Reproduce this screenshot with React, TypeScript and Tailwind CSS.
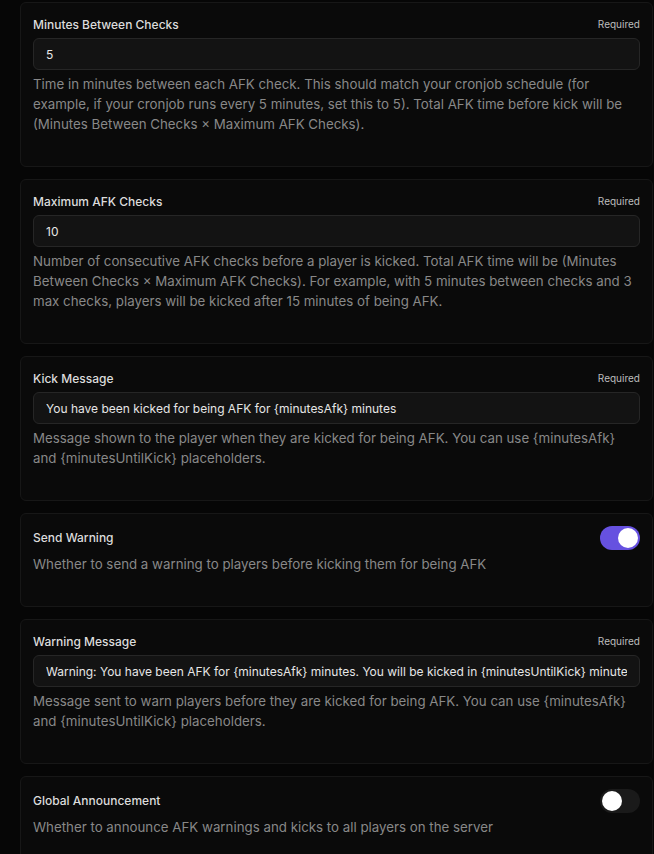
import React, { useState } from "react";

type Field =
    | { kind: "text"; label: string; value: string; help: string }
    | { kind: "toggle"; label: string; on: boolean; help: string };

const fields: Field[] = [
    {
        kind: "text",
        label: "Minutes Between Checks",
        value: "5",
        help: "Time in minutes between each AFK check. This should match your cronjob schedule (for example, if your cronjob runs every 5 minutes, set this to 5). Total AFK time before kick will be (Minutes Between Checks × Maximum AFK Checks).",
    },
    {
        kind: "text",
        label: "Maximum AFK Checks",
        value: "10",
        help: "Number of consecutive AFK checks before a player is kicked. Total AFK time will be (Minutes Between Checks × Maximum AFK Checks). For example, with 5 minutes between checks and 3 max checks, players will be kicked after 15 minutes of being AFK.",
    },
    {
        kind: "text",
        label: "Kick Message",
        value: "You have been kicked for being AFK for {minutesAfk} minutes",
        help: "Message shown to the player when they are kicked for being AFK. You can use {minutesAfk} and {minutesUntilKick} placeholders.",
    },
    {
        kind: "toggle",
        label: "Send Warning",
        on: true,
        help: "Whether to send a warning to players before kicking them for being AFK",
    },
    {
        kind: "text",
        label: "Warning Message",
        value: "Warning: You have been AFK for {minutesAfk} minutes. You will be kicked in {minutesUntilKick} minutes.",
        help: "Message sent to warn players before they are kicked for being AFK. You can use {minutesAfk} and {minutesUntilKick} placeholders.",
    },
    {
        kind: "toggle",
        label: "Global Announcement",
        on: false,
        help: "Whether to announce AFK warnings and kicks to all players on the server",
    },
];

function Toggle({ initial }: { initial: boolean }) {
    const [on, setOn] = useState(initial);
    return (
        <button
            type="button"
            onClick={() => setOn(!on)}
            className={`relative h-6 w-10 shrink-0 rounded-full transition-colors ${on ? "bg-[#6651e0]" : "bg-[#1a1a1a]"}`}
        >
            <span
                className={`absolute top-0.5 h-5 w-5 rounded-full bg-white transition-all ${on ? "left-[18px]" : "left-0.5"}`}
            />
        </button>
    );
}

function FieldCard({ field }: { field: Field }) {
    return (
        <div className="rounded-md border border-[#171717] bg-[#0a0a0a] px-3 pt-3 pb-8">
            {field.kind === "text" ? (
                <>
                    <div className="mb-1 flex h-[19px] items-center justify-between">
                        <label className="text-xs font-medium text-[#dcdcdc]">{field.label}</label>
                        <span className="text-[10px] text-[#bdbdbd]">Required</span>
                    </div>
                    <input
                        defaultValue={field.value}
                        className="h-8 w-full rounded-md border border-[#262626] bg-[#131313] px-3 text-xs text-[#e6e6e6] outline-none"
                    />
                </>
            ) : (
                <div className="flex h-6 items-center justify-between">
                    <label className="text-xs font-medium text-[#dcdcdc]">{field.label}</label>
                    <Toggle initial={field.on} />
                </div>
            )}
            <p className="mt-1 text-[13.3px] leading-5 text-[#888888]">{field.help}</p>
        </div>
    );
}

export default function App() {
    return (
        <div
            className="min-h-screen bg-[#060606] pt-[2px] pl-5 pr-px"
            style={{ fontFamily: "Inter, 'Liberation Sans', sans-serif" }}
        >
            <div className="flex flex-col gap-3">
                {fields.map((f) => (
                    <FieldCard key={f.label} field={f} />
                ))}
            </div>
        </div>
    );
}
